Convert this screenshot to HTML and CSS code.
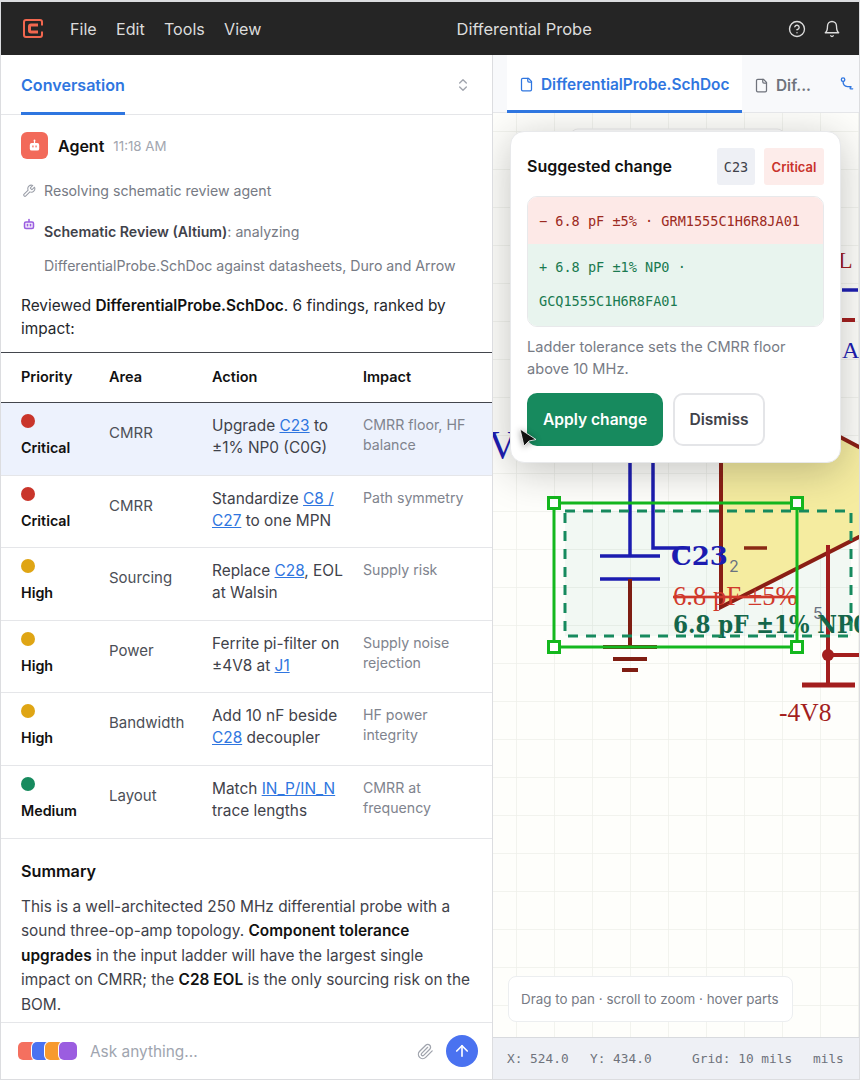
FILE: index.html
```html
<!DOCTYPE html>
<html lang="en">

<head>
    <meta charset="UTF-8">
    <title>Differential Probe</title>
    <link rel="stylesheet" href="styles.css">
</head>

<body>
    <div class="app">
        <header class="topbar">
            <svg class="logo" viewBox="0 0 20 19" fill="none" stroke="#f2674f" stroke-width="2">
                <path d="M19 6.500V3a2 2 0 0 0-2-2H3a2 2 0 0 0-2 2v13a2 2 0 0 0 2 2h14a2 2 0 0 0 2-2v-3.500" />
                <path d="M15 6H8A1.500 1.500 0 0 0 6.500 7.500v4A1.500 1.500 0 0 0 8 13h7" stroke-width="3" />
            </svg>
            <nav class="menu">
                <span>File</span>
                <span>Edit</span>
                <span>Tools</span>
                <span>View</span>
            </nav>
            <div class="doc-title">Differential Probe</div>
            <div class="top-icons">
                <svg viewBox="0 0 24 24" fill="none" stroke="currentColor" stroke-width="1.800" stroke-linecap="round" stroke-linejoin="round">
                    <circle cx="12" cy="12" r="10" />
                    <path d="M9.090 9a3 3 0 0 1 5.830 1c0 2-3 3-3 3" />
                    <path d="M12 17h.010" />
                </svg>
                <svg viewBox="0 0 24 24" fill="none" stroke="currentColor" stroke-width="1.800" stroke-linecap="round" stroke-linejoin="round">
                    <path d="M6 8a6 6 0 0 1 12 0c0 7 3 9 3 9H3s3-2 3-9" />
                    <path d="M10.300 21a1.940 1.940 0 0 0 3.400 0" />
                </svg>
            </div>
        </header>

        <div class="panes">
            <section class="chat">
                <div class="chat-tabs">
                    <div class="chat-tab">Conversation</div>
                    <svg class="chevrons" viewBox="0 0 24 24" fill="none" stroke="currentColor" stroke-width="2" stroke-linecap="round" stroke-linejoin="round">
                        <path d="m7 15 5 5 5-5" />
                        <path d="m7 9 5-5 5 5" />
                    </svg>
                </div>

                <div class="chat-scroll">
                    <div class="agent">
                        <div class="avatar">
                            <svg viewBox="0 0 24 24">
                                <path d="M12 8V4.500" fill="none" stroke="#fff" stroke-width="2" />
                                <circle cx="12" cy="4" r="1.500" fill="#fff" />
                                <rect x="4.500" y="8" width="15" height="12" rx="3" fill="#fff" />
                                <rect x="8.500" y="12" width="2" height="3" fill="#f26a5a" />
                                <rect x="13.500" y="12" width="2" height="3" fill="#f26a5a" />
                            </svg>
                        </div>
                        <b>Agent</b>
                        <span class="time">11:18 AM</span>
                    </div>

                    <div class="step">
                        <svg viewBox="0 0 24 24" fill="none" stroke="#9a9ea8" stroke-width="1.800" stroke-linecap="round" stroke-linejoin="round">
                            <path d="M14.700 6.300a1 1 0 0 0 0 1.400l1.600 1.600a1 1 0 0 0 1.400 0l3.770-3.770a6 6 0 0 1-7.940 7.940l-6.910 6.910a2.120 2.120 0 0 1-3-3l6.910-6.910a6 6 0 0 1 7.940-7.940l-3.760 3.760z" />
                        </svg>
                        Resolving schematic review agent
                    </div>

                    <div class="step step-agent">
                        <svg viewBox="0 0 24 24" fill="#efe6fb" stroke="#9b5de0" stroke-width="3" stroke-linecap="round" stroke-linejoin="round">
                            <path d="M12 8V3" />
                            <rect x="3" y="8" width="18" height="13" rx="3" />
                            <path d="M9 13v2.500" />
                            <path d="M15 13v2.500" />
                        </svg>
                        <span><strong>Schematic Review (Altium)</strong>: analyzing</span>
                    </div>
                    <div class="step step-more">DifferentialProbe.SchDoc against datasheets, Duro and Arrow</div>

                    <p class="intro">Reviewed <b>DifferentialProbe.SchDoc</b>. 6 findings, ranked by impact:</p>

                    <table class="findings">
                        <thead>
                            <tr>
                                <th>Priority</th>
                                <th>Area</th>
                                <th>Action</th>
                                <th>Impact</th>
                            </tr>
                        </thead>
                        <tbody>
                            <tr class="valgt">
                                <td class="prio"><i class="dot red"></i><b>Critical</b></td>
                                <td class="area">CMRR</td>
                                <td class="action">Upgrade <a href="#">C23</a> to ±1% NP0 (C0G)</td>
                                <td class="impact">CMRR floor, HF balance</td>
                            </tr>
                            <tr>
                                <td class="prio"><i class="dot red"></i><b>Critical</b></td>
                                <td class="area">CMRR</td>
                                <td class="action">Standardize <a href="#">C8 / C27</a> to one MPN</td>
                                <td class="impact">Path symmetry</td>
                            </tr>
                            <tr>
                                <td class="prio"><i class="dot amber"></i><b>High</b></td>
                                <td class="area">Sourcing</td>
                                <td class="action">Replace <a href="#">C28</a>, EOL at Walsin</td>
                                <td class="impact">Supply risk</td>
                            </tr>
                            <tr>
                                <td class="prio"><i class="dot amber"></i><b>High</b></td>
                                <td class="area">Power</td>
                                <td class="action">Ferrite pi-filter on ±4V8 at <a href="#">J1</a></td>
                                <td class="impact">Supply noise rejection</td>
                            </tr>
                            <tr>
                                <td class="prio"><i class="dot amber"></i><b>High</b></td>
                                <td class="area">Bandwidth</td>
                                <td class="action">Add 10 nF beside <a href="#">C28</a> decoupler</td>
                                <td class="impact">HF power integrity</td>
                            </tr>
                            <tr>
                                <td class="prio"><i class="dot green"></i><b>Medium</b></td>
                                <td class="area">Layout</td>
                                <td class="action">Match <a href="#">IN_P/IN_N</a> trace lengths</td>
                                <td class="impact">CMRR at frequency</td>
                            </tr>
                        </tbody>
                    </table>

                    <div class="summary">
                        <h3>Summary</h3>
                        <p>This is a well-architected 250 MHz differential probe with a sound three-op-amp topology. <b>Component tolerance upgrades</b> in the input ladder will have the largest single impact on CMRR; the <b>C28 EOL</b> is the only sourcing risk on the BOM.</p>
                    </div>
                </div>

                <div class="ask">
                    <div class="swatches">
                        <i class="s1"></i><i class="s2"></i><i class="s3"></i><i class="s4"></i>
                    </div>
                    <span class="placeholder">Ask anything...</span>
                    <svg class="clip" viewBox="0 0 24 24" fill="none" stroke="currentColor" stroke-width="1.800" stroke-linecap="round" stroke-linejoin="round">
                        <path d="m21.440 11.050-9.190 9.190a6 6 0 0 1-8.490-8.490l8.570-8.570A4 4 0 1 1 18 8.840l-8.590 8.570a2 2 0 0 1-2.830-2.830l8.490-8.480" />
                    </svg>
                    <button class="send">
                        <svg viewBox="0 0 24 24" fill="none" stroke="#fff" stroke-width="2.200" stroke-linecap="round" stroke-linejoin="round">
                            <path d="m5 12 7-7 7 7" />
                            <path d="M12 19V5" />
                        </svg>
                    </button>
                </div>
            </section>

            <section class="viewer">
                <div class="file-tabs">
                    <div class="file-tab active">
                        <svg viewBox="0 0 24 24" fill="none" stroke="currentColor" stroke-width="2" stroke-linecap="round" stroke-linejoin="round">
                            <path d="M15 2H6a2 2 0 0 0-2 2v16a2 2 0 0 0 2 2h12a2 2 0 0 0 2-2V7Z" />
                            <path d="M14 2v4a2 2 0 0 0 2 2h4" />
                        </svg>
                        DifferentialProbe.SchDoc
                    </div>
                    <div class="file-tab">
                        <svg viewBox="0 0 24 24" fill="none" stroke="currentColor" stroke-width="2" stroke-linecap="round" stroke-linejoin="round">
                            <path d="M15 2H6a2 2 0 0 0-2 2v16a2 2 0 0 0 2 2h12a2 2 0 0 0 2-2V7Z" />
                            <path d="M14 2v4a2 2 0 0 0 2 2h4" />
                        </svg>
                        Dif...
                    </div>
                    <svg class="route" viewBox="0 0 16 16" fill="none" stroke="#2f76e0" stroke-width="1.500" stroke-linecap="round">
                        <circle cx="3.500" cy="3" r="2" />
                        <path d="M3.500 5c0 4 2 5.500 5 6h4" />
                        <path d="M14.500 13.500h-2a1 1 0 0 1 0-2" />
                    </svg>
                </div>

                <div class="canvas">
                    <svg class="sheet" viewBox="493 113 367 924">
                        <defs>
                            <pattern id="grid" x="478" y="511" width="38" height="38" patternUnits="userSpaceOnUse">
                                <path d="M38 0H0V38" fill="none" stroke="#eef0ea" stroke-width="1.500" />
                            </pattern>
                        </defs>
                        <rect x="493" y="113" width="367" height="924" fill="#fefefb" />
                        <rect x="493" y="113" width="367" height="924" fill="url(#grid)" />
                        <rect x="570" y="129" width="215" height="30" rx="8" fill="#fff" stroke="#ececec" />

                        <!-- dashed footprint -->
                        <rect x="565" y="511" width="286" height="125" fill="#178a5e" fill-opacity="0.05" />

                        <!-- opamp -->
                        <polygon points="721,374 946,493 721,607" fill="#f5eca0" stroke="#8a1e14" stroke-width="4" />
                        <path d="M744 548H767" stroke="#8a2a14" stroke-width="3.500" />

                        <!-- C23 -->
                        <path d="M630 400V556M653 400V548H690" fill="none" stroke="#1c1cb0" stroke-width="3.500" />
                        <path d="M600 556H660M600 579H660" stroke="#1c1cb0" stroke-width="3.500" />
                        <path d="M630 579V647M603 647H657M613 659H647M622 670H638" fill="none" stroke="#7f1d12" stroke-width="4" />

                        <!-- output leg -->
                        <path d="M828 545V685M828 655H860" fill="none" stroke="#a31e1e" stroke-width="4" />
                        <path d="M802 685H855" stroke="#a31e1e" stroke-width="5" />
                        <circle cx="828" cy="655" r="6" fill="#a31e1e" />

                        <path d="M842 290H858" stroke="#1c1cb0" stroke-width="3.500" />
                        <path d="M842 320H855" stroke="#a31e1e" stroke-width="4" />

                        <text class="sch" x="838" y="268" font-size="24" fill="#a31e1e">L</text>
                        <text class="sch" x="842" y="358" font-size="24" fill="#1c1cb0">A</text>
                        <text class="sch" x="488" y="458" font-size="40" fill="#1c1cb0">V</text>
                        <text class="sch" x="779" y="721" font-size="25.500" fill="#a31e1e">-4V8</text>
                        <text class="deja" x="671" y="565" font-size="26" fill="#1c1cb0">C23</text>
                        <text class="pin" x="729" y="572">2</text>
                        <text class="pin" x="813" y="619">5</text>
                        <text class="sch" x="673" y="605" font-size="26.600" fill="#d0392b" text-decoration="line-through">6.8 pF ±5%</text>
                        <text class="deja narrow" x="673" y="633" font-size="24" fill="#14664a">6.8 pF ±1% NP0</text>

                        <!-- selection -->
                        <rect x="565" y="511" width="286" height="125" fill="none" stroke="#178a5e" stroke-width="3" stroke-dasharray="10 8" />
                        <rect x="554" y="503" width="243" height="144" fill="none" stroke="#14b81e" stroke-width="3" />
                        <g fill="#fff" stroke="#14b81e" stroke-width="3">
                            <rect x="548.500" y="497.500" width="11" height="11" />
                            <rect x="791.500" y="497.500" width="11" height="11" />
                            <rect x="548.500" y="641.500" width="11" height="11" />
                            <rect x="791.500" y="641.500" width="11" height="11" />
                        </g>
                    </svg>

                    <div class="popup">
                        <div class="popup-head">
                            <h4>Suggested change</h4>
                            <span class="chip ref">C23</span>
                            <span class="chip crit">Critical</span>
                        </div>
                        <div class="diff">
                            <div class="del">− 6.8 pF ±5% · GRM1555C1H6R8JA01</div>
                            <div class="add">+ 6.8 pF ±1% NP0 · GCQ1555C1H6R8FA01</div>
                        </div>
                        <p class="why">Ladder tolerance sets the CMRR floor above 10 MHz.</p>
                        <div class="buttons">
                            <button class="apply">Apply change</button>
                            <button class="dismiss">Dismiss</button>
                        </div>
                    </div>

                    <svg class="cursor" viewBox="0 0 20 20">
                        <path d="M2 1L18 11.500L11 13L6 18Z" fill="#111" stroke="#fff" stroke-width="0.800" />
                    </svg>

                    <div class="hint">Drag to pan · scroll to zoom · hover parts</div>
                </div>

                <footer class="status">
                    <span class="x">X: 524.0</span>
                    <span class="y">Y: 434.0</span>
                    <span class="g">Grid: 10 mils</span>
                    <span>mils</span>
                </footer>
            </section>
        </div>
    </div>
</body>

</html>
```
FILE: styles.css
```css
* {
    box-sizing: border-box;
}

html,
body {
    margin: 0;
    height: 100%;
    overflow: hidden;
}

body {
    font-family: Inter, "Liberation Sans", sans-serif;
    color: #3f424a;
    background: #fff;
}

.app {
    height: 1080px;
    display: flex;
    flex-direction: column;
    border: 1px solid #dcdde0;
    border-top-width: 2px;
}

/* top bar */
.topbar {
    flex: 0 0 53px;
    display: flex;
    align-items: center;
    position: relative;
    background: #252525;
    color: #dcdcdc;
    padding: 0 18px 0 22px;
}

.logo {
    width: 20px;
    height: 19px;
}

.menu {
    display: flex;
    gap: 19.300px;
    margin-left: 27px;
    font-size: 16.100px;
}

.doc-title {
    position: absolute;
    left: 455.500px;
    font-size: 16.500px;
}

.top-icons {
    margin-left: auto;
    display: flex;
    gap: 17px;
}

.top-icons svg {
    width: 18px;
    height: 18px;
}

.panes {
    flex: 1;
    display: flex;
    min-height: 0;
}

/* left side */
.chat {
    flex: 0 0 492px;
    display: flex;
    flex-direction: column;
    border-right: 1px solid #dcdde0;
    min-height: 0;
}

.chat-tabs {
    flex: 0 0 60px;
    display: flex;
    justify-content: space-between;
    align-items: center;
    padding: 0 20px;
    border-bottom: 1px solid #e5e6e9;
}

.chat-tab {
    height: 60px;
    margin-bottom: -1px;
    padding-top: 20px;
    color: #2f76e0;
    font-size: 16.100px;
    font-weight: 600;
    border-bottom: 3px solid #2f76e0;
}

.chevrons {
    width: 16px;
    height: 16px;
    color: #a0a4ad;
    margin-right: 1px;
}

.chat-scroll {
    flex: 1;
    overflow: hidden;
    min-height: 0;
}

.agent {
    display: flex;
    align-items: center;
    padding: 17px 20px 0;
    height: 44px;
    font-size: 16px;
    color: #111;
}

.agent b {
    font-weight: 600;
}

.avatar {
    width: 27px;
    height: 27px;
    border-radius: 6px;
    background: #f26a5a;
    margin-right: 10px;
    display: flex;
    align-items: center;
    justify-content: center;
}

.avatar svg {
    width: 15px;
    height: 15px;
}

.time {
    margin-left: 9px;
    font-size: 13.300px;
    color: #a2a6af;
}

.step {
    position: relative;
    padding-left: 43px;
    font-size: 14.150px;
    color: #777b85;
    line-height: 20px;
}

.step svg {
    position: absolute;
    left: 21px;
    width: 14px;
    height: 14px;
    top: 3px;
}

.agent + .step {
    margin-top: 22px;
}

.step-agent {
    margin-top: 21px;
}

.step-agent svg {
    left: 22px;
    top: -4px;
    width: 12px;
    height: 12px;
}

.step-agent strong {
    font-weight: 600;
    color: #3f424a;
}

.step-more {
    margin-top: 14px;
}

.intro {
    margin: 18px 20px 0;
    font-size: 15.400px;
    line-height: 23px;
    color: #26282d;
}

.intro b {
    font-weight: 600;
    color: #111;
}

/* findings table */
.findings {
    width: 100%;
    margin-top: 12px;
    border-collapse: collapse;
    table-layout: fixed;
}

.findings th {
    height: 50px;
    text-align: left;
    font-size: 14.500px;
    font-weight: 600;
    color: #111;
    padding: 0 0 2px;
    border-top: 1px solid #43464d;
    border-bottom: 1px solid #43464d;
}

.findings th:nth-child(1) {
    width: 108px;
    padding-left: 20px;
}

.findings th:nth-child(2) {
    width: 103px;
}

.findings th:nth-child(3) {
    width: 151px;
}

.findings td {
    height: 72.500px;
    padding: 0;
    vertical-align: top;
    border-bottom: 1px solid #e5e6e9;
}

.findings tr.valgt td {
    background: #edf2fd;
}

.findings tbody tr:last-child td {
    border-bottom: 0;
}

.prio {
    padding-left: 20px !important;
    padding-top: 11px !important;
    font-size: 14.300px;
}

.prio b {
    display: block;
    margin-top: 10px;
    line-height: 20px;
    font-weight: 600;
    color: #111;
}

.dot {
    display: block;
    width: 14px;
    height: 14px;
    border-radius: 50%;
}

.red {
    background: #c9352b;
}

.amber {
    background: #dfa514;
}

.green {
    background: #178a5e;
}

.area {
    padding-top: 20px !important;
    font-size: 15px;
    line-height: 20px;
    color: #4c4f57;
}

.action {
    padding: 12px 14px 0 0 !important;
    font-size: 15.400px;
    line-height: 22px;
    color: #3f424a;
}

.action a {
    color: #2f76e0;
}

.impact {
    padding: 12px 20px 0 0 !important;
    font-size: 14.150px;
    line-height: 20px;
    color: #80848e;
}

.summary {
    border-top: 1px solid #e5e6e9;
    padding: 21px 20px 0;
}

.summary h3 {
    margin: 0 0 13px;
    font-size: 16.200px;
    line-height: 22px;
    font-weight: 600;
    color: #111;
}

.summary p {
    margin: 0;
    font-size: 15.400px;
    line-height: 24.600px;
    color: #3f424a;
}

.summary b {
    font-weight: 600;
    color: #111;
}

.ask {
    flex: 0 0 57px;
    display: flex;
    align-items: center;
    border-top: 1px solid #e5e6e9;
    padding: 0 14px 0 17px;
}

.swatches {
    display: flex;
    width: 72px;
}

.swatches i {
    width: 18px;
    height: 18px;
    border-radius: 5px;
    margin-right: -4.500px;
    box-shadow: 0 0 0 1px #fff;
}

.s1 {
    background: #f4705f;
}

.s2 {
    background: #4a72f0;
}

.s3 {
    background: #f79a2e;
}

.s4 {
    background: #9b5de0;
}

.placeholder {
    flex: 1;
    font-size: 15.400px;
    color: #a0a5af;
}

.clip {
    width: 17px;
    height: 17px;
    color: #a0a4ad;
    margin-right: 12px;
}

.send {
    width: 32px;
    height: 32px;
    border: none;
    padding: 7px;
    border-radius: 50%;
    background: #4a72f0;
}

.send svg {
    display: block;
    width: 18px;
    height: 18px;
}

/* right side */
.viewer {
    flex: 1;
    display: flex;
    flex-direction: column;
    min-width: 0;
    overflow: hidden;
}

.file-tabs {
    flex: 0 0 58px;
    display: flex;
    align-items: stretch;
    padding-left: 14px;
    background: #f8f9fb;
    border-bottom: 1px solid #e5e6e9;
    white-space: nowrap;
}

.file-tab {
    display: flex;
    align-items: center;
    flex: none;
    gap: 7px;
    padding: 3px 12px 0;
    font-size: 15.400px;
    font-weight: 600;
    color: #6f737c;
}

.file-tab svg {
    flex: none;
    width: 15px;
    height: 15px;
}

.file-tab.active {
    width: 235px;
    background: #fff;
    color: #2f76e0;
    border-bottom: 3px solid #2f76e0;
    margin-bottom: -1px;
}

.route {
    flex: none;
    width: 14px;
    height: 14px;
    margin: 22px 0 0 17px;
}

.canvas {
    flex: 1;
    position: relative;
    min-height: 0;
    overflow: hidden;
}

.sheet {
    display: block;
    width: 367px;
    height: 924px;
}

.sch {
    font-family: "Liberation Serif", serif;
}

.deja {
    font-family: "DejaVu Serif", serif;
    font-weight: 700;
}

.narrow {
    font-stretch: condensed;
}

.pin {
    font-family: Inter, sans-serif;
    font-size: 16px;
    fill: #6b7280;
}

.popup {
    position: absolute;
    left: 17px;
    top: 18px;
    width: 331px;
    height: 332px;
    padding: 16px;
    background: #fff;
    border-radius: 14px;
    border: 1px solid #e8e9eb;
    box-shadow: 0 8px 40px rgba(30, 30, 30, 0.26);
}

.popup-head {
    display: flex;
    align-items: center;
    height: 37px;
}

.popup-head h4 {
    flex: 1;
    margin: -2px 0 0;
    font-size: 16px;
    font-weight: 600;
    color: #111;
}

.chip {
    display: flex;
    align-items: center;
    height: 37px;
    border-radius: 3px;
    justify-content: center;
}

.ref {
    width: 38px;
    background: #eef0f5;
    font-family: "DejaVu Sans Mono", monospace;
    font-size: 13.500px;
    color: #3f424a;
}

.crit {
    width: 60px;
    margin-left: 9px;
    background: #fdecea;
    color: #c9322b;
    font-size: 13px;
    font-weight: 600;
}

.diff {
    margin-top: 11px;
    border: 1px solid #e8e9eb;
    border-radius: 10px;
    overflow: hidden;
    font-family: "DejaVu Sans Mono", monospace;
    font-size: 13.550px;
}

.del {
    height: 47px;
    padding: 0 11px;
    line-height: 49px;
    background: #fde9e7;
    color: #9c2a22;
    white-space: pre;
}

.add {
    height: 82px;
    padding: 6px 11px;
    line-height: 34px;
    background: #e8f4ee;
    color: #1a7a50;
}

.why {
    margin: 9px 0 0;
    font-size: 14.600px;
    line-height: 22px;
    color: #777b85;
}

.buttons {
    display: flex;
    gap: 10px;
    margin-top: 13px;
}

.buttons button {
    height: 53px;
    border-radius: 10px;
    font-family: inherit;
    font-size: 15.600px;
    font-weight: 600;
}

.apply {
    width: 136px;
    border: none;
    background: #178a5e;
    color: #fff;
}

.dismiss {
    width: 92px;
    border: 2px solid #e4e5e8;
    background: #fff;
    color: #3f424a;
}

.cursor {
    position: absolute;
    left: 25px;
    top: 315px;
    width: 20px;
    height: 20px;
    filter: drop-shadow(0 1px 3px rgba(0, 0, 0, 0.4));
}

.hint {
    position: absolute;
    left: 15px;
    top: 863px;
    width: 285px;
    height: 46px;
    line-height: 44px;
    padding-left: 12px;
    background: #fff;
    border: 1px solid #eceef0;
    border-radius: 8px;
    font-size: 13.400px;
    color: #777b85;
}

.status {
    flex: 0 0 42px;
    display: flex;
    align-items: center;
    padding-left: 14px;
    background: #eef0f5;
    border-top: 1px solid #d8dade;
    font-family: "DejaVu Sans Mono", monospace;
    font-size: 12.800px;
    color: #6f737c;
    white-space: nowrap;
}

.x {
    width: 83px;
}

.y {
    width: 102px;
}

.g {
    width: 121px;
}
```
